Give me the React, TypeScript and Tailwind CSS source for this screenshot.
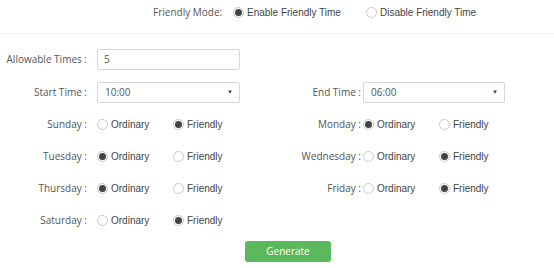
import { useState } from "react";

const days = [
    ["Sunday", "Monday"],
    ["Tuesday", "Wednesday"],
    ["Thursday", "Friday"],
    ["Saturday", ""],
];

function Radio({ checked, label, onClick }: { checked: boolean; label: string; onClick: () => void }) {
    return (
        <div className="flex items-center cursor-pointer" onClick={onClick}>
            <div className="w-[11px] h-[11px] rounded-full border border-[#c9c9c9] bg-white flex items-center justify-center shrink-0">
                {checked && <div className="w-[7px] h-[7px] rounded-full bg-[#444]" />}
            </div>
            <span className="ml-[3px] text-[10px] text-[#444] font-['Liberation_Sans',Arial,sans-serif]">{label}</span>
        </div>
    );
}

function DayGroup({ value, setValue }: { value: string; setValue: (v: string) => void }) {
    return (
        <div className="flex items-center">
            <div className="w-[76px]">
                <Radio checked={value === "ordinary"} label="Ordinary" onClick={() => setValue("ordinary")} />
            </div>
            <Radio checked={value === "friendly"} label="Friendly" onClick={() => setValue("friendly")} />
        </div>
    );
}

function Select({ value }: { value: string }) {
    return (
        <div className="h-[21px] border border-[#d6d6d6] rounded-[2px] bg-white flex items-center justify-between pl-[7px] pr-[6px]">
            <span className="text-[10px] text-[#555]">{value}</span>
            <span className="text-[6px] text-[#444]">▼</span>
        </div>
    );
}

export default function App() {
    const [mode, setMode] = useState("enable");
    const [week, setWeek] = useState<Record<string, string>>({
        Sunday: "friendly",
        Monday: "ordinary",
        Tuesday: "ordinary",
        Wednesday: "friendly",
        Thursday: "ordinary",
        Friday: "friendly",
        Saturday: "friendly",
    });

    return (
        <div className="w-[554px] h-[268px] bg-white font-['Open_Sans',sans-serif] text-[#555]">
            <div className="h-[34px] border-b border-[#f3f3f3]">
                <div className="h-[25px] flex items-center pl-[153px]">
                    <span className="text-[10px] w-[80px]">Friendly Mode:</span>
                    <div className="w-[133px]">
                        <Radio checked={mode === "enable"} label="Enable Friendly Time" onClick={() => setMode("enable")} />
                    </div>
                    <Radio checked={mode === "disable"} label="Disable Friendly Time" onClick={() => setMode("disable")} />
                </div>
            </div>

            <div className="mt-[15px] flex items-center">
                <div className="w-[87px] text-right text-[10px]">Allowable Times :</div>
                <div className="ml-[10px] w-[143px] h-[21px] border border-[#d6d6d6] rounded-[2px] flex items-center pl-[6px] text-[10px]">5</div>
            </div>

            <div className="mt-[12px] flex items-center">
                <div className="w-[277px] flex items-center">
                    <div className="w-[87px] text-right text-[10px]">Start Time :</div>
                    <div className="ml-[10px] w-[143px]">
                        <Select value="10:00" />
                    </div>
                </div>
                <div className="flex items-center">
                    <div className="w-[84px] text-right text-[10px]">End Time :</div>
                    <div className="ml-[2px] w-[142px]">
                        <Select value="06:00" />
                    </div>
                </div>
            </div>

            <div className="mt-[5px]">
                {days.map(([left, right]) => (
                    <div key={left} className="h-[32px] flex items-center">
                        <div className="w-[277px] flex items-center">
                            <div className="w-[87px] text-right text-[10px]">{left} :</div>
                            <div className="ml-[10px]">
                                <DayGroup value={week[left]} setValue={(v) => setWeek({ ...week, [left]: v })} />
                            </div>
                        </div>
                        {right && (
                            <div className="flex items-center">
                                <div className="w-[84px] text-right text-[10px]">{right} :</div>
                                <div className="ml-[2px]">
                                    <DayGroup value={week[right]} setValue={(v) => setWeek({ ...week, [right]: v })} />
                                </div>
                            </div>
                        )}
                    </div>
                ))}
            </div>

            <div className="mt-[5px] pl-[245px] flex">
                <button className="w-[86px] h-[21px] rounded-[3px] bg-[#5cb85c] text-white text-[10px]">Generate</button>
            </div>
        </div>
    );
}
